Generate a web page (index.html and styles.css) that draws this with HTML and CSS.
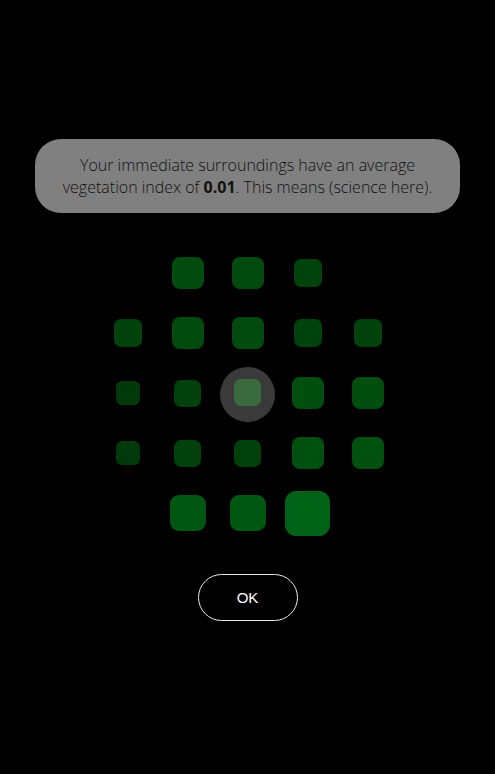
FILE: index.html
```html
<!DOCTYPE html>
<html>
<head>
<meta charset="utf-8">
<link rel="stylesheet" href="styles.css">
</head>
<body>
<div class="page">
  <div class="bubble">
    <p>Your immediate surroundings have an average vegetation index of <b>0.01</b>. This means (science here).</p>
  </div>
  <div class="grid">
    <span class="cell"></span>
    <span class="cell"><i class="sq s32 g75"></i></span>
    <span class="cell"><i class="sq s32 g75"></i></span>
    <span class="cell"><i class="sq s28 g62"></i></span>
    <span class="cell"></span>

    <span class="cell"><i class="sq s28 g62"></i></span>
    <span class="cell"><i class="sq s32 g75"></i></span>
    <span class="cell"><i class="sq s32 g75"></i></span>
    <span class="cell"><i class="sq s28 g62"></i></span>
    <span class="cell"><i class="sq s28 g62"></i></span>

    <span class="cell"><i class="sq s24 g52"></i></span>
    <span class="cell"><i class="sq s27 g60"></i></span>
    <span class="cell"><span class="ring"><i class="sq s27 here"></i></span></span>
    <span class="cell"><i class="sq s32 g78"></i></span>
    <span class="cell"><i class="sq s32 g78"></i></span>

    <span class="cell"><i class="sq s24 g52"></i></span>
    <span class="cell"><i class="sq s27 g60"></i></span>
    <span class="cell"><i class="sq s27 g60"></i></span>
    <span class="cell"><i class="sq s32 g80"></i></span>
    <span class="cell"><i class="sq s32 g80"></i></span>

    <span class="cell"></span>
    <span class="cell"><i class="sq s36 g85"></i></span>
    <span class="cell"><i class="sq s36 g85"></i></span>
    <span class="cell"><i class="sq s45 g95"></i></span>
    <span class="cell"></span>
  </div>
  <button class="ok">OK</button>
</div>
</body>
</html>
```

FILE: styles.css
```css
html, body {
  margin: 0;
  padding: 0;
  background: #000;
}
.page {
  width: 495px;
  height: 774px;
  display: flex;
  flex-direction: column;
  align-items: center;
  padding-top: 139px;
  box-sizing: border-box;
}
.bubble {
  width: 425px;
  height: 74px;
  background: #808080;
  border-radius: 26px;
  display: flex;
  align-items: center;
  justify-content: center;
  box-sizing: border-box;
}
.bubble p {
  margin: 0;
  width: 380px;
  text-align: center;
  font-family: "Open Sans", sans-serif;
  font-weight: 300;
  font-size: 16px;
  line-height: 22px;
  color: #111;
}
.bubble b {
  font-weight: 700;
  color: #111;
}
.grid {
  margin-top: 30px;
  display: grid;
  grid-template-columns: repeat(5, 60px);
  grid-template-rows: repeat(5, 60px);
}
.cell {
  display: flex;
  align-items: center;
  justify-content: center;
}
.sq {
  display: block;
}
.s24 { width: 24px; height: 24px; border-radius: 6px; }
.s27 { width: 27px; height: 27px; border-radius: 7px; }
.s28 { width: 28px; height: 28px; border-radius: 7px; }
.s32 { width: 32px; height: 32px; border-radius: 8px; }
.s36 { width: 36px; height: 36px; border-radius: 9px; }
.s45 { width: 45px; height: 45px; border-radius: 11px; }
.g52 { background: #003a0a; }
.g60 { background: #00400b; }
.g62 { background: #00420b; }
.g75 { background: #004b0d; }
.g78 { background: #004f0e; }
.g80 { background: #00510f; }
.g85 { background: #005712; }
.g95 { background: #006216; }
.ring {
  width: 55px;
  height: 55px;
  border-radius: 50%;
  background: #3a3a3a;
  display: flex;
  align-items: center;
  justify-content: center;
  margin-top: 2px;
}
.here {
  background: #3a6a3f;
  margin-top: -3px;
}
.ok {
  margin-top: 31px;
  width: 100px;
  height: 47px;
  border: 1px solid #e8e8e8;
  border-radius: 24px;
  background: #000;
  color: #fff;
  font-family: "Liberation Sans", Arial, sans-serif;
  font-size: 15px;
  padding: 0;
}
```
